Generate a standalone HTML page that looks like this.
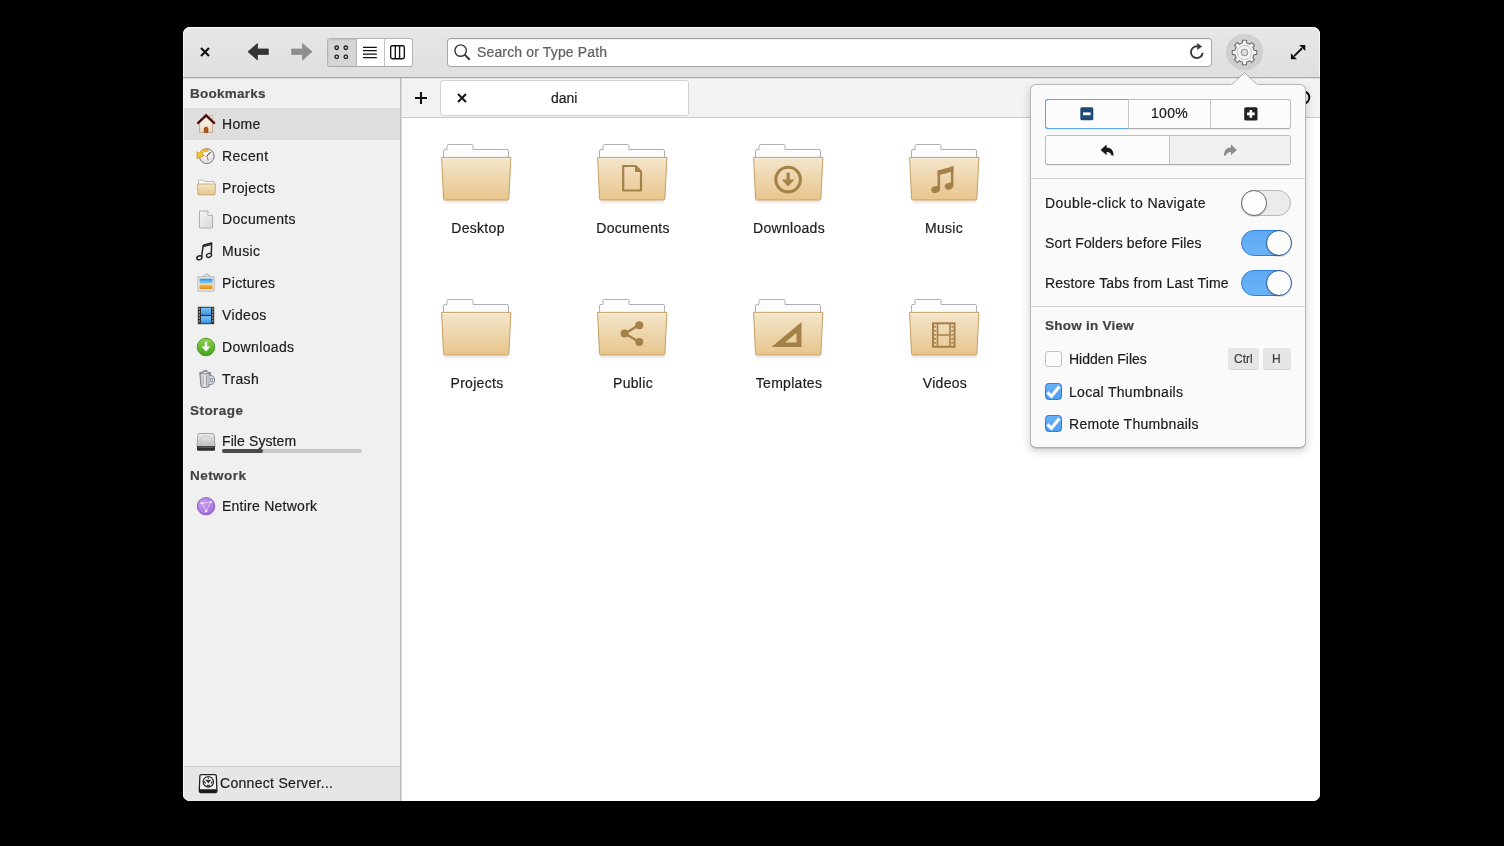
<!DOCTYPE html>
<html><head><meta charset="utf-8">
<style>
*{box-sizing:border-box;margin:0;padding:0}
html,body{width:1504px;height:846px;background:#000;overflow:hidden;font-family:"Liberation Sans",sans-serif;color:#1c1c1c}
.a{position:absolute}
#win{position:absolute;left:183px;top:27px;width:1137px;height:774px;border-radius:7px 7px 7px 7px;overflow:hidden;background:#fff}
#hb{position:absolute;left:0;top:0;width:1137px;height:51px;border-radius:7px 7px 0 0;background:linear-gradient(#e7e7e7,#dfdfdf);border-bottom:1px solid #ababab;box-shadow:inset 0 1px 0 #fbfbfb, inset 1px 0 0 #f6f6f6, inset -1px 0 0 #f6f6f6}
#side{position:absolute;left:0;top:51px;width:218px;height:723px;background:#f0f0f0;border-right:1px solid #bdbdbd;box-shadow:inset 1px 0 0 #fafafa}
#tabs{position:absolute;left:219px;top:51px;width:918px;height:40px;background:linear-gradient(#f6f6f6,#f2f2f2 5px,#f2f2f2);border-bottom:1px solid #cbcbcb}
#content{position:absolute;left:219px;top:91px;width:918px;height:683px;background:#fff}
.t{position:absolute;white-space:pre;line-height:14px;font-size:14px;height:14px;will-change:transform;-webkit-text-stroke:0.2px currentColor}
.b{font-weight:bold}
svg{position:absolute;overflow:visible}
</style></head>
<body>
<svg width="0" height="0" style="position:absolute">
<defs>
  <linearGradient id="fg" x1="0" y1="0" x2="0" y2="1">
    <stop offset="0" stop-color="#f3e6cc"/><stop offset="1" stop-color="#e8c58c"/>
  </linearGradient>
  <linearGradient id="bg2" x1="0" y1="0" x2="0" y2="1">
    <stop offset="0" stop-color="#ffffff"/><stop offset="1" stop-color="#ececf0"/>
  </linearGradient>
  <filter id="fsh" x="-20%" y="-20%" width="140%" height="150%"><feGaussianBlur stdDeviation="1.2"/></filter>
  <symbol id="folder" viewBox="0 0 72 62" overflow="visible">
    <path d="M3,57 H67.5 L67.5,58.6 H3Z" fill="#000" opacity=".16" filter="url(#fsh)"/>
    <path d="M2.5,50 V7 Q2.5,5.5 4,5.5 H6 V1.8 Q6,0.5 7.5,0.5 H30.5 Q32,0.5 32,1.8 V5.5 H66 Q67.5,5.5 67.5,7 V50 Z" fill="url(#bg2)" stroke="#aeaeb8" stroke-width="1"/>
    <path d="M0.6,13.4 H69.9 L67.9,54.6 Q67.8,56 66.4,56 H4 Q2.6,56 2.5,54.6 Z" fill="url(#fg)" stroke="#c6a066" stroke-width="1"/>
    <path d="M1.6,14.5 H68.9" stroke="#f8eedb" stroke-width="1"/>
  </symbol>
</defs>
</svg>

<div id="win">
  <div id="hb"></div>
  <div id="side"></div>
  <div id="tabs"></div>
  <div id="content"></div>
  <div class="a" style="left:218px;top:51px;width:1px;height:723px;background:#d9d9d9"></div>
  <div class="a" style="left:0;top:51px;width:1137px;height:1px;background:rgba(0,0,0,.09)"></div>
  <div class="a" style="left:1px;top:739px;width:216px;height:35px;background:#e6e6e6;border-top:1px solid #cdcdcd"></div>
</div>

<!-- ===== HEADERBAR ===== -->
<!-- close -->
<svg style="left:200px;top:47px" width="10" height="10"><path d="M1,1 L9,9 M9,1 L1,9" stroke="#111" stroke-width="2.1" stroke-linecap="butt"/></svg>
<!-- back -->
<svg style="left:247px;top:43px" width="22" height="18"><path d="M1,8.7 L10.5,0.5 V6 H21.3 V11.5 H10.5 V17 Z" fill="#333" stroke="#333" stroke-width="0.8" stroke-linejoin="round"/></svg>
<!-- forward -->
<svg style="left:291px;top:43px" width="22" height="18"><path d="M21,8.7 L11.5,0.5 V6 H0.7 V11.5 H11.5 V17 Z" fill="#8e8e8e" stroke="#8e8e8e" stroke-width="0.8" stroke-linejoin="round"/></svg>
<!-- view switcher -->
<div class="a" style="left:327px;top:38px;width:86px;height:29px;border:1px solid #b4b4b4;border-bottom-color:#a8a8a8;border-radius:3px;background:#fff;overflow:hidden">
  <div class="a" style="left:0;top:0;width:28px;height:27px;background:#d6d6d6;box-shadow:inset 0 1px 2px rgba(0,0,0,.12)"></div>
  <div class="a" style="left:28px;top:0;width:1px;height:27px;background:#b9b9b9"></div>
  <div class="a" style="left:56px;top:0;width:1px;height:27px;background:#c4c4c4"></div>
</div>
<svg style="left:334px;top:45px" width="16" height="14"><g fill="none" stroke="#222" stroke-width="1.35"><circle cx="2.7" cy="2.7" r="1.75"/><circle cx="11.8" cy="2.7" r="1.75"/><circle cx="2.7" cy="11.8" r="1.75"/><circle cx="11.8" cy="11.8" r="1.75"/></g></svg>
<svg style="left:362px;top:46px" width="16" height="13"><g stroke="#111" stroke-width="1.25"><path d="M1,1.3 H14.8 M1,4.7 H14.8 M1,8.1 H14.8 M1,11.5 H14.8"/></g></svg>
<svg style="left:390px;top:45px" width="16" height="15"><g fill="none" stroke="#111" stroke-width="1.35"><rect x="0.7" y="0.7" width="13.6" height="13" rx="1.6"/><path d="M5.3,0.8 V13.6 M9.6,0.8 V13.6"/></g></svg>

<!-- search entry -->
<div class="a" style="left:447px;top:38px;width:765px;height:29px;background:#fff;border:1px solid #a8a8a8;border-top-color:#9c9c9c;border-bottom-color:#a2a2a2;border-radius:4px;box-shadow:inset 0 1px 1px rgba(0,0,0,.06)"></div>
<svg style="left:453.5px;top:44px" width="18" height="17"><g fill="none" stroke="#353535" stroke-width="1.4"><circle cx="6.6" cy="6.6" r="5.7"/><path d="M10.6,10.6 L15.8,15.8" stroke-width="2"/></g></svg>
<div class="t" style="left:476.5px;top:45.3px;color:#5e5e5e;letter-spacing:0.15px">Search or Type Path</div>
<svg style="left:1188px;top:42px" width="18" height="18"><path d="M9.4,4.3 A5.9,5.9 0 1 0 14.7,10.9" fill="none" stroke="#383838" stroke-width="1.85"/><path d="M9.2,1.1 L14.1,4.6 L9.2,7.9 Z" fill="#383838"/></svg>

<!-- gear button -->
<div class="a" style="left:1226px;top:34px;width:37px;height:36px;border-radius:50%;background:radial-gradient(circle at 50% 45%,#d9d9d9 0%,#cfcfcf 60%,#c9c9c9 100%)"></div>
<svg style="left:1231px;top:39px" width="27" height="27" viewBox="0 0 27 27">
  <path d="M9.75,4.45 L11.38,3.93 L11.45,1.27 L15.55,1.27 L15.62,3.93 L17.25,4.45 L18.77,5.23 L20.70,3.40 L23.60,6.30 L21.77,8.23 L22.55,9.75 L23.07,11.38 L25.73,11.45 L25.73,15.55 L23.07,15.62 L22.55,17.25 L21.77,18.77 L23.60,20.70 L20.70,23.60 L18.77,21.77 L17.25,22.55 L15.62,23.07 L15.55,25.73 L11.45,25.73 L11.38,23.07 L9.75,22.55 L8.23,21.77 L6.30,23.60 L3.40,20.70 L5.23,18.77 L4.45,17.25 L3.93,15.62 L1.27,15.55 L1.27,11.45 L3.93,11.38 L4.45,9.75 L5.23,8.23 L3.40,6.30 L6.30,3.40 L8.23,5.23Z" fill="#f4f4f4" stroke="#6e6e6e" stroke-width="1.1" stroke-linejoin="round"/>
  <circle cx="13.5" cy="13.5" r="7.2" fill="none" stroke="#d0d0d0" stroke-width="1.2"/>
  <circle cx="13.5" cy="13.5" r="3.2" fill="#dcdcdc" stroke="#9a9a9a" stroke-width="1.1"/>
</svg>
<!-- expand -->
<svg style="left:1290px;top:44px" width="16" height="16" viewBox="0 0 16 16"><path d="M15.3,1 V7.1 L9.2,1 Z" fill="#111"/><path d="M0.9,15.3 V9.2 L7,15.3 Z" fill="#111"/><path d="M12,4.3 L4.2,12.1" stroke="#111" stroke-width="2"/></svg>

<!-- ===== SIDEBAR ===== -->
<div class="a" style="left:184px;top:108px;width:216px;height:32px;background:#dedede"></div>
<div class="t b" style="left:190px;top:86.8px;color:#444;font-size:13.5px;letter-spacing:0.25px">Bookmarks</div>
<div class="t" style="left:222px;top:116.8px;letter-spacing:0.35px">Home</div>
<div class="t" style="left:222px;top:148.7px;letter-spacing:0.35px">Recent</div>
<div class="t" style="left:222px;top:180.5px;letter-spacing:0.35px">Projects</div>
<div class="t" style="left:222px;top:212.4px;letter-spacing:0.35px">Documents</div>
<div class="t" style="left:222px;top:244.2px;letter-spacing:0.35px">Music</div>
<div class="t" style="left:222px;top:276.1px;letter-spacing:0.35px">Pictures</div>
<div class="t" style="left:222px;top:307.9px;letter-spacing:0.35px">Videos</div>
<div class="t" style="left:222px;top:339.8px;letter-spacing:0.35px">Downloads</div>
<div class="t" style="left:222px;top:371.6px;letter-spacing:0.35px">Trash</div>
<div class="t b" style="left:190px;top:403.8px;color:#444;font-size:13.5px;letter-spacing:0.45px">Storage</div>
<div class="t" style="left:222px;top:434.3px;letter-spacing:0.1px">File System</div>
<div class="a" style="left:222px;top:449px;width:140px;height:3.5px;border-radius:2px;background:#c8c8c8"></div>
<div class="a" style="left:222px;top:449px;width:41px;height:3.5px;border-radius:2px;background:#4a4a4a"></div>
<div class="t b" style="left:190px;top:468.9px;color:#444;font-size:13.5px;letter-spacing:0.45px">Network</div>
<div class="t" style="left:222px;top:499.0px;letter-spacing:0.25px">Entire Network</div>
<!-- bottom connect -->
<div class="t" style="left:220px;top:776px;letter-spacing:0.3px">Connect Server...</div>

<!-- sidebar icons -->
<!-- home -->
<svg style="left:196px;top:113px" width="20" height="21" viewBox="0 0 20 21">
  <defs><linearGradient id="hg" x1="0" y1="0" x2="0" y2="1"><stop offset="0" stop-color="#fbf4ea"/><stop offset="1" stop-color="#ecdcc4"/></linearGradient></defs>
  <rect x="13.8" y="2.6" width="2.4" height="5" fill="#efe2cf" stroke="#c2a27c" stroke-width="0.6"/>
  <path d="M3.6,9.6 V19.4 H16.6 V9.6 L10.1,3.8 Z" fill="url(#hg)" stroke="#bf9b73" stroke-width="0.8"/>
  <path d="M1.4,10.6 L10.1,2.4 L18.8,10.6" fill="none" stroke="#4d0d0d" stroke-width="2.3" stroke-linejoin="miter"/>
  <path d="M8.2,19.4 V15.2 Q10.1,12.6 12,15.2 V19.4 Z" fill="#b4541a" stroke="#7a3510" stroke-width="0.6"/>
</svg>
<!-- recent -->
<svg style="left:196px;top:146px" width="20" height="20" viewBox="0 0 20 20">
  <defs><radialGradient id="rg" cx="0.45" cy="0.4" r="0.7"><stop offset="0" stop-color="#fafafa"/><stop offset="1" stop-color="#d6d6d6"/></radialGradient></defs>
  <circle cx="10.8" cy="10.2" r="7.4" fill="url(#rg)" stroke="#7d7d7d" stroke-width="1"/>
  <path d="M10.8,10.2 L14.6,6" stroke="#2b2b2b" stroke-width="1"/>
  <path d="M10.8,10.2 L12.2,14.2" stroke="#e0442a" stroke-width="0.9"/>
  <path d="M3.2,7.2 Q6.5,1.6 12.6,3.2 L11.8,5.2 Q7.8,4.4 5.8,8.4 L8.6,9.6 L1,12.6 L0.8,5.6 Z" fill="#f2c42c" stroke="#c28e10" stroke-width="0.6" stroke-linejoin="round"/>
</svg>
<!-- projects folder -->
<svg style="left:197px;top:179px" width="19" height="17" viewBox="0 0 19 17">
  <path d="M1.5,14 V2 Q1.5,1 2.5,1 H7 L8,2.5 H16.5 Q17.5,2.5 17.5,3.5 V14Z" fill="#fafafa" stroke="#aaa" stroke-width="0.8"/>
  <path d="M0.6,5 H18.4 L18,15.8 H1Z" fill="url(#fg)" stroke="#c29a5e" stroke-width="0.8"/>
</svg>
<!-- documents -->
<svg style="left:198px;top:210px" width="16" height="19" viewBox="0 0 16 19">
  <defs><linearGradient id="dg" x1="0" y1="0" x2="1" y2="1"><stop offset="0" stop-color="#f4f4f4"/><stop offset="1" stop-color="#d9d9d9"/></linearGradient></defs>
  <path d="M1.5,1 H10 L14.5,5.5 V18 H1.5 Z" fill="url(#dg)" stroke="#a8a8a8" stroke-width="0.9" stroke-linejoin="round"/>
  <path d="M10,1 V5.5 H14.5" fill="#fbfbfb" stroke="#a8a8a8" stroke-width="0.8"/>
</svg>
<!-- music -->
<svg style="left:196px;top:241px" width="18" height="21" viewBox="0 0 18 21">
  <path d="M5.6,16.4 Q6.2,10 7.3,4.2 L15.6,2 Q15.5,8.5 15.2,14" fill="none" stroke="#222" stroke-width="1.5" stroke-linejoin="round"/>
  <path d="M7.1,5.6 L15.5,3.4" stroke="#222" stroke-width="1.3"/>
  <ellipse cx="3.4" cy="16.8" rx="2.6" ry="1.9" transform="rotate(-15 3.4 16.8)" fill="#f0f0f0" stroke="#222" stroke-width="1.4"/>
  <ellipse cx="13" cy="14.4" rx="2.6" ry="1.9" transform="rotate(-15 13 14.4)" fill="#f0f0f0" stroke="#222" stroke-width="1.4"/>
</svg>
<!-- pictures -->
<svg style="left:197px;top:273px" width="19" height="20" viewBox="0 0 19 20">
  <path d="M5,4.5 L9.8,0.8 L13.5,3.6" fill="none" stroke="#8a8a8a" stroke-width="0.8"/>
  <rect x="0.9" y="3.8" width="16.2" height="14.2" rx="0.6" fill="#fafafa" stroke="#9a9a9a" stroke-width="0.8"/>
  <defs><linearGradient id="pg" x1="0" y1="0" x2="0" y2="1"><stop offset="0" stop-color="#2e8fd8"/><stop offset="0.45" stop-color="#8fd0f4"/><stop offset="0.5" stop-color="#fff6dc"/><stop offset="0.62" stop-color="#f4b448"/><stop offset="1" stop-color="#e08a1a"/></linearGradient></defs>
  <rect x="2.4" y="5.6" width="13.2" height="10.6" fill="url(#pg)"/>
</svg>
<!-- videos -->
<svg style="left:197px;top:306px" width="18" height="19" viewBox="0 0 18 19">
  <defs><linearGradient id="vg" x1="0" y1="0" x2="0" y2="1"><stop offset="0" stop-color="#7cc4f8"/><stop offset="1" stop-color="#3a92e4"/></linearGradient></defs>
  <rect x="1" y="1" width="16" height="17" fill="#2e2e2e" stroke="#555" stroke-width="0.5"/>
  <rect x="4" y="1.8" width="10" height="7.1" fill="url(#vg)"/>
  <rect x="4" y="10.1" width="10" height="7.1" fill="url(#vg)"/>
  <g fill="#e6e6e6"><rect x="1.8" y="2.5" width="1.2" height="1"/><rect x="1.8" y="5.5" width="1.2" height="1"/><rect x="1.8" y="8.5" width="1.2" height="1"/><rect x="1.8" y="11.5" width="1.2" height="1"/><rect x="1.8" y="14.5" width="1.2" height="1"/><rect x="15" y="2.5" width="1.2" height="1"/><rect x="15" y="5.5" width="1.2" height="1"/><rect x="15" y="8.5" width="1.2" height="1"/><rect x="15" y="11.5" width="1.2" height="1"/><rect x="15" y="14.5" width="1.2" height="1"/></g>
</svg>
<!-- downloads -->
<svg style="left:196px;top:337px" width="20" height="20" viewBox="0 0 20 20">
  <defs><linearGradient id="dlg" x1="0" y1="0" x2="0" y2="1"><stop offset="0" stop-color="#8cd24c"/><stop offset="1" stop-color="#48a01c"/></linearGradient></defs>
  <circle cx="10" cy="10" r="8.8" fill="url(#dlg)" stroke="#3f8a1a" stroke-width="0.8"/>
  <path d="M10,4.6 V12.5" stroke="#fff" stroke-width="2.4"/>
  <path d="M5.5,9.4 L10,14.6 L14.5,9.4 Z" fill="#fff"/>
</svg>
<!-- trash -->
<svg style="left:198px;top:369px" width="18" height="20" viewBox="0 0 18 20">
  <defs><linearGradient id="tg" x1="0" y1="0" x2="1" y2="0"><stop offset="0" stop-color="#b8bcc4"/><stop offset="0.4" stop-color="#eceef2"/><stop offset="1" stop-color="#a9adb6"/></linearGradient></defs>
  <path d="M1.8,4 L3,17.6 Q7,19.6 11,17.6 L12.4,4 Z" fill="url(#tg)" stroke="#6f737c" stroke-width="0.9"/>
  <path d="M1.6,3.8 Q7,1 12.6,3.8 Q7,6.4 1.6,3.8Z" fill="#e4e6ea" stroke="#6f737c" stroke-width="0.8"/>
  <path d="M4.2,3 Q6,0.8 9.4,1.6" fill="none" stroke="#6f737c" stroke-width="0.8"/>
  <path d="M5.2,6.5 V16.2 M8.5,6.5 V16.4" stroke="#8d9098" stroke-width="0.8"/>
  <path d="M11.6,6.4 Q16.2,6 16.6,11 Q16.2,16 11.2,15.6" fill="#dfe1e5" stroke="#6f737c" stroke-width="0.9"/>
  <rect x="12.6" y="9.4" width="2" height="3.6" fill="none" stroke="#6f737c" stroke-width="0.6"/>
</svg>
<!-- file system -->
<svg style="left:196px;top:432px" width="20" height="20" viewBox="0 0 20 20">
  <defs><linearGradient id="hdg" x1="0" y1="0" x2="0" y2="1"><stop offset="0" stop-color="#f0f0f0"/><stop offset="1" stop-color="#bdbdbd"/></linearGradient></defs>
  <path d="M3.2,1.6 H16.8 Q17.8,1.6 18,2.6 L19,14.5 H1 L2,2.6 Q2.2,1.6 3.2,1.6Z" fill="url(#hdg)" stroke="#8a8a8a" stroke-width="0.8"/>
  <ellipse cx="10" cy="8.6" rx="6" ry="4.6" fill="none" stroke="#c4c4c4" stroke-width="1"/>
  <path d="M1,14.3 H19 V17.6 Q19,18.8 17.8,18.8 H2.2 Q1,18.8 1,17.6Z" fill="#2c2c2c"/>
  <path d="M2.5,15.6 H17.5" stroke="#777" stroke-width="0.7"/>
</svg>
<!-- network -->
<svg style="left:196px;top:496px" width="20" height="20" viewBox="0 0 20 20">
  <defs><radialGradient id="ng" cx="0.4" cy="0.35" r="0.7"><stop offset="0" stop-color="#c9a0f0"/><stop offset="1" stop-color="#9a62d2"/></radialGradient></defs>
  <circle cx="10" cy="10.2" r="8.8" fill="url(#ng)" stroke="#8550ba" stroke-width="0.7"/>
  <path d="M5.6,7.2 L14.8,6.2 L10.2,15.2 Z" fill="none" stroke="#e4d0f6" stroke-width="0.8"/>
  <circle cx="10" cy="10.2" r="6.3" fill="none" stroke="#c29ae8" stroke-width="0.6"/>
  <g fill="#fff"><circle cx="5.6" cy="7.2" r="1.1"/><circle cx="14.8" cy="6.2" r="1.1"/><circle cx="10.2" cy="15.2" r="1.1"/></g>
</svg>
<!-- connect server -->
<svg style="left:197.6px;top:773px" width="21" height="21" viewBox="0 0 21 21">
  <path d="M3.2,1.6 H17 Q18.2,1.6 18.3,2.8 L18.9,17.6 Q19,19.5 17.2,19.5 H3 Q1.2,19.5 1.3,17.6 L1.9,2.8 Q2,1.6 3.2,1.6 Z" fill="#f7f7f7" stroke="#1e1e1e" stroke-width="1.3"/>
  <path d="M1.3,16.2 H18.9 V17.8 Q18.9,19.5 17.2,19.5 H3 Q1.3,19.5 1.3,17.8 Z" fill="#1a1a1a"/>
  <circle cx="10.3" cy="8.8" r="5.2" fill="#fff" stroke="#2a2a2a" stroke-width="1.3"/>
  <path d="M8.4,7.2 H12.2 L10.3,9.6 Z M6.2,8.2 L7.6,10.6 M14.4,8.2 L13,10.6 M8.8,12.4 L11.8,12.4 M10.3,4.4 V6" stroke="#333" stroke-width="1.1" fill="#333"/>
</svg>

<!-- ===== TABS ===== -->
<svg style="left:415px;top:92px" width="12" height="12"><path d="M6,0 V12 M0,6 H12" stroke="#111" stroke-width="2.1"/></svg>
<div class="a" style="left:440px;top:80px;width:249px;height:36px;background:#fff;border:1px solid #d2d2d2;border-radius:3px 3px 3px 3px"></div>
<svg style="left:457px;top:93px" width="10" height="10"><path d="M1,1 L9,9 M9,1 L1,9" stroke="#111" stroke-width="2"/></svg>
<div class="t" style="left:550.5px;top:91px">dani</div>
<svg style="left:1295px;top:89px" width="18" height="18"><circle cx="8" cy="8.5" r="6.3" fill="none" stroke="#111" stroke-width="2"/></svg>

<!-- ===== CONTENT ===== -->
<svg style="left:441px;top:144px" width="72" height="62"><use href="#folder"/></svg>
<svg style="left:597px;top:144px" width="72" height="62"><use href="#folder"/>
  <path d="M26.2,22 H38.5 L44,27.5 V46.5 H26.2 Z" fill="none" stroke="#a5814a" stroke-width="2.2" stroke-linejoin="round"/>
  <path d="M38,22 V28 H44 Z" fill="#a5814a"/>
</svg>
<svg style="left:753px;top:144px" width="72" height="62"><use href="#folder"/>
  <circle cx="35.1" cy="35.6" r="12.3" fill="none" stroke="#a5814a" stroke-width="3.1"/>
  <path d="M35.1,28.6 V37" stroke="#a5814a" stroke-width="3.2"/>
  <path d="M28.8,35.6 H41.4 L35.1,42.6 Z" fill="#a5814a"/>
</svg>
<svg style="left:908.5px;top:144px" width="72" height="62"><use href="#folder"/>
  <path d="M28.6,26.6 L44.4,22.3 V27.2 L28.6,31.4 Z" fill="#a5814a"/>
  <rect x="28.6" y="26.6" width="2.5" height="19" fill="#a5814a"/>
  <rect x="41.9" y="22.3" width="2.5" height="19.6" fill="#a5814a"/>
  <ellipse cx="26.6" cy="45.6" rx="4.3" ry="3.4" transform="rotate(-18 26.6 45.6)" fill="#a5814a"/>
  <ellipse cx="40" cy="42.2" rx="4.3" ry="3.4" transform="rotate(-18 40 42.2)" fill="#a5814a"/>
</svg>

<svg style="left:441px;top:298.5px" width="72" height="62"><use href="#folder"/></svg>
<svg style="left:597px;top:298.5px" width="72" height="62"><use href="#folder"/>
  <path d="M28,34.5 L42,26 M28,34.5 L42,43" stroke="#a5814a" stroke-width="2.4"/>
  <circle cx="27.6" cy="34.6" r="4" fill="#a5814a"/><circle cx="42.3" cy="26.2" r="4" fill="#a5814a"/><circle cx="42.3" cy="43" r="4" fill="#a5814a"/>
</svg>
<svg style="left:753px;top:298.5px" width="72" height="62"><use href="#folder"/>
  <path d="M18.5,48 L48.5,23 V48 Z M32,43.5 H43.5 V34 Z" fill="#a5814a" fill-rule="evenodd"/>
</svg>
<svg style="left:908.5px;top:298.5px" width="72" height="62"><use href="#folder"/>
  <rect x="24" y="24.3" width="21.5" height="23.5" fill="none" stroke="#a5814a" stroke-width="2"/>
  <path d="M28.5,24.3 V47.8 M41,24.3 V47.8 M28.5,36 H41" stroke="#a5814a" stroke-width="1.6"/>
  <g fill="#a5814a"><rect x="25.2" y="27" width="2" height="1.6"/><rect x="25.2" y="31" width="2" height="1.6"/><rect x="25.2" y="35" width="2" height="1.6"/><rect x="25.2" y="39" width="2" height="1.6"/><rect x="25.2" y="43" width="2" height="1.6"/><rect x="42.3" y="27" width="2" height="1.6"/><rect x="42.3" y="31" width="2" height="1.6"/><rect x="42.3" y="35" width="2" height="1.6"/><rect x="42.3" y="39" width="2" height="1.6"/><rect x="42.3" y="43" width="2" height="1.6"/></g>
</svg>

<div class="t" style="left:477.8px;top:220.9px;transform:translateX(-50%);letter-spacing:0.3px">Desktop</div>
<div class="t" style="left:632.5px;top:220.9px;transform:translateX(-50%);letter-spacing:0.3px">Documents</div>
<div class="t" style="left:788.5px;top:220.9px;transform:translateX(-50%);letter-spacing:0.3px">Downloads</div>
<div class="t" style="left:944.2px;top:220.9px;transform:translateX(-50%);letter-spacing:0.3px">Music</div>
<div class="t" style="left:476.8px;top:376.2px;transform:translateX(-50%);letter-spacing:0.3px">Projects</div>
<div class="t" style="left:632.5px;top:376.2px;transform:translateX(-50%);letter-spacing:0.3px">Public</div>
<div class="t" style="left:788.5px;top:376.2px;transform:translateX(-50%);letter-spacing:0.3px">Templates</div>
<div class="t" style="left:944.7px;top:376.2px;transform:translateX(-50%);letter-spacing:0.3px">Videos</div>

<!-- ===== POPOVER ===== -->
<div class="a" style="left:1030px;top:84px;width:276px;height:364px;border-radius:6px;background:#fafafa;border:1px solid rgba(0,0,0,.27);border-bottom-color:rgba(0,0,0,.3);box-shadow:0 1px 0 rgba(0,0,0,.1),0 3px 9px rgba(0,0,0,.2)"></div>
<svg style="left:1231px;top:72px" width="27" height="14"><path d="M0.5,13 L13.5,0.6 L26.5,13" fill="#fafafa" stroke="rgba(0,0,0,.28)" stroke-width="1"/><rect x="0" y="12.5" width="27" height="2" fill="#fafafa"/></svg>

<!-- zoom linked -->
<div class="a" style="left:1045px;top:99px;width:246px;height:30px;border:1px solid #bdbdbd;border-bottom-color:#aaaaaa;border-radius:3px;background:#fcfcfc;box-shadow:0 1px 0 rgba(0,0,0,.06)"></div>
<div class="a" style="left:1127.5px;top:100px;width:1px;height:28px;background:#c6c6c6"></div>
<div class="a" style="left:1209.5px;top:100px;width:1px;height:28px;background:#c6c6c6"></div>
<div class="a" style="left:1045px;top:99px;width:83px;height:30px;border:1.5px solid #5ea8f2;border-right:none;border-radius:3px 0 0 3px"></div>
<svg style="left:1080px;top:107px" width="14" height="14"><rect x="0.3" y="0.3" width="13" height="13" rx="1.5" fill="#1e4a78"/><rect x="3" y="5.4" width="7.6" height="2.8" fill="#fff"/></svg>
<div class="t" style="left:1150.6px;top:106.2px;letter-spacing:0.3px">100%</div>
<svg style="left:1243.5px;top:107px" width="14" height="14"><rect x="0.2" y="0.2" width="13.3" height="13.3" rx="1.5" fill="#222"/><path d="M6.85,3 V10.7 M3,6.85 H10.7" stroke="#fff" stroke-width="2.6"/></svg>

<!-- undo/redo -->
<div class="a" style="left:1045px;top:135px;width:246px;height:30px;border:1px solid #bdbdbd;border-bottom-color:#aaaaaa;border-radius:3px;background:#fcfcfc;overflow:hidden;box-shadow:0 1px 0 rgba(0,0,0,.06)">
  <div class="a" style="left:123px;top:0;width:123px;height:28px;background:#f0f0f0;border-left:1px solid #c6c6c6"></div>
</div>
<svg style="left:1100px;top:143px" width="16" height="14"><path d="M0.6,6.9 L6.6,1.4 V4.5 Q13.3,4.6 13.7,12.6 H11.5 Q10.9,9.1 6.6,9.1 V12.3 Z" fill="#1a1a1a"/></svg>
<svg style="left:1222px;top:143px" width="16" height="14"><path d="M14.9,6.9 L8.9,1.4 V4.5 Q2.2,4.6 1.8,12.6 H4 Q4.6,9.1 8.9,9.1 V12.3 Z" fill="#8c8c8c"/></svg>

<div class="a" style="left:1031px;top:178px;width:274px;height:1px;background:#d2d2d2"></div>

<!-- toggles -->
<div class="t" style="left:1044.6px;top:196px;letter-spacing:0.42px">Double-click to Navigate</div>
<div class="t" style="left:1044.6px;top:236px;letter-spacing:0.13px">Sort Folders before Files</div>
<div class="t" style="left:1044.6px;top:275.8px;letter-spacing:0.19px">Restore Tabs from Last Time</div>

<div class="a" style="left:1241px;top:190px;width:50px;height:26px;border-radius:13px;background:#ebebeb;border:1px solid #b9b9b9"></div>
<div class="a" style="left:1241px;top:190px;width:26px;height:26px;border-radius:50%;background:#fdfdfd;border:1px solid #6c6c6c;box-shadow:0 1px 1px rgba(0,0,0,.15)"></div>

<div class="a" style="left:1241px;top:229.7px;width:50px;height:26px;border-radius:13px;background:linear-gradient(#5ea9f3,#6ab3f7);border:1.2px solid #2f7fd6"></div>
<div class="a" style="left:1265.5px;top:229.7px;width:26px;height:26px;border-radius:50%;background:#fdfdfd;border:1.3px solid #1f5694;box-shadow:0 1px 1px rgba(0,0,0,.15)"></div>

<div class="a" style="left:1241px;top:269.6px;width:50px;height:26px;border-radius:13px;background:linear-gradient(#5ea9f3,#6ab3f7);border:1.2px solid #2f7fd6"></div>
<div class="a" style="left:1265.5px;top:269.6px;width:26px;height:26px;border-radius:50%;background:#fdfdfd;border:1.3px solid #1f5694;box-shadow:0 1px 1px rgba(0,0,0,.15)"></div>

<div class="a" style="left:1031px;top:306px;width:274px;height:1px;background:#d2d2d2"></div>

<div class="t b" style="left:1044.5px;top:319.3px;color:#444;font-size:13.5px;letter-spacing:0.25px">Show in View</div>
<div class="a" style="left:1045px;top:350.5px;width:16.5px;height:16.5px;border:1px solid #c2c2c2;border-radius:3px;background:#fcfcfc"></div>
<div class="t" style="left:1069px;top:351.9px">Hidden Files</div>
<div class="a" style="left:1228px;top:348px;width:31px;height:21px;border-radius:3px;background:#e6e6e6;box-shadow:0 1px 0 #d2d2d2"></div>
<div class="a" style="left:1263px;top:348px;width:28px;height:21px;border-radius:3px;background:#e6e6e6;box-shadow:0 1px 0 #d2d2d2"></div>
<div class="t" style="left:1234.3px;top:352.2px;font-size:12px;color:#3c3c3c">Ctrl</div>
<div class="t" style="left:1272.2px;top:352.2px;font-size:12px;color:#3c3c3c">H</div>

<svg style="left:1045px;top:383px" width="17" height="17"><defs><linearGradient id="cb" x1="0" y1="0" x2="0" y2="1"><stop offset="0" stop-color="#6ab2f8"/><stop offset="1" stop-color="#4d9cf0"/></linearGradient></defs><rect x="0.5" y="0.5" width="16" height="16" rx="3" fill="url(#cb)" stroke="#347dd0"/><path d="M2.4,9.3 L6.4,13.4 L14.3,3.4" fill="none" stroke="#fff" stroke-width="3.2"/></svg>
<div class="t" style="left:1068.6px;top:385px;letter-spacing:0.3px">Local Thumbnails</div>
<svg style="left:1045px;top:415px" width="17" height="17"><rect x="0.5" y="0.5" width="16" height="16" rx="3" fill="url(#cb)" stroke="#347dd0"/><path d="M2.4,9.3 L6.4,13.4 L14.3,3.4" fill="none" stroke="#fff" stroke-width="3.2"/></svg>
<div class="t" style="left:1068.6px;top:416.6px;letter-spacing:0.28px">Remote Thumbnails</div>

</body></html>
